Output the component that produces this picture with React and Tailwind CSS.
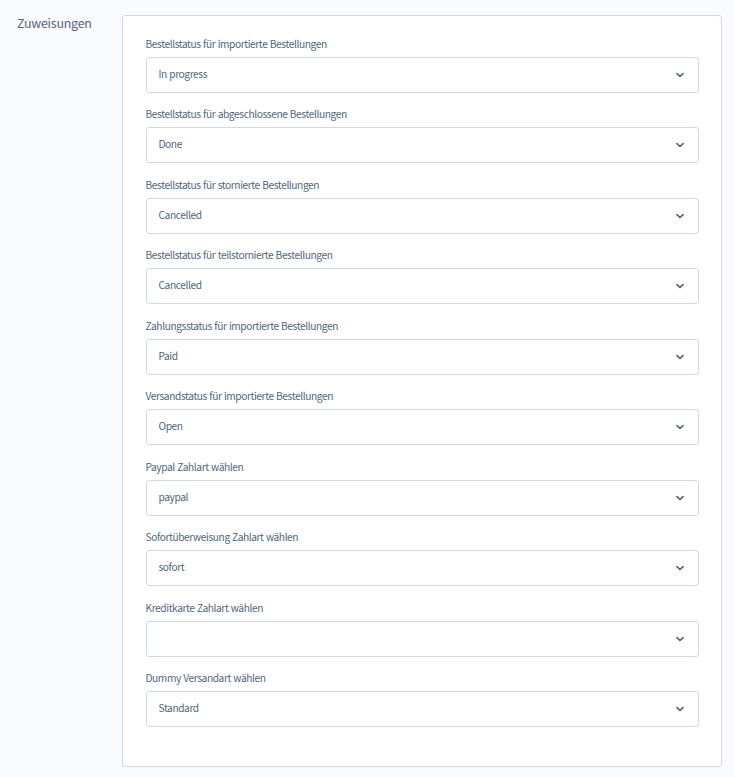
import React from "react";

const fields = [
  { label: "Bestellstatus für importierte Bestellungen", value: "In progress" },
  { label: "Bestellstatus für abgeschlossene Bestellungen", value: "Done" },
  { label: "Bestellstatus für stornierte Bestellungen", value: "Cancelled" },
  { label: "Bestellstatus für teilstornierte Bestellungen", value: "Cancelled" },
  { label: "Zahlungsstatus für importierte Bestellungen", value: "Paid" },
  { label: "Versandstatus für importierte Bestellungen", value: "Open" },
  { label: "Paypal Zahlart wählen", value: "paypal" },
  { label: "Sofortüberweisung Zahlart wählen", value: "sofort" },
  { label: "Kreditkarte Zahlart wählen", value: "" },
  { label: "Dummy Versandart wählen", value: "Standard" },
];

const SelectField = ({ label, value }) => (
  <div className="h-[70.45px]">
    <div className="h-4 mb-[5px] -ml-[0.5px] text-[10.2px] leading-4 tracking-[-0.41px] [word-spacing:0.5px] whitespace-nowrap">
      {label}
    </div>
    <button
      type="button"
      aria-label={label}
      className="flex h-9 w-full items-center justify-between rounded-[3px] border border-[#d1d9e0] bg-white pl-[11.5px] pr-[14px] text-left"
    >
      <span className="pb-0.5 text-[10.2px] leading-4 tracking-[-0.41px] [word-spacing:0.5px]">
        {value}
      </span>
      <svg
        className="h-2 w-2"
        viewBox="0 0 8 8"
        fill="none"
        stroke="#52667a"
        strokeWidth="1.7"
        strokeLinecap="round"
        strokeLinejoin="round"
      >
        <path d="M1 2.6 4 5.5 7 2.6" />
      </svg>
    </button>
  </div>
);

const App = () => {
  return (
    <div className="flex h-[777px] w-[734px] bg-[#f9fafb] pt-[15px] font-['Noto_Sans_CJK_SC',sans-serif] text-[#52667a]">
      <h2 className="w-[122px] shrink-0 pl-[17px] text-[12.4px] leading-4 tracking-[-0.2px]">
        Zuweisungen
      </h2>
      <div className="h-[752px] w-[600px] rounded-[3px] border border-[#d1d9e0] bg-white pl-[23px] pt-5 pr-[22px]">
        {fields.map((field) => (
          <SelectField key={field.label} {...field} />
        ))}
      </div>
    </div>
  );
};

export default App;
